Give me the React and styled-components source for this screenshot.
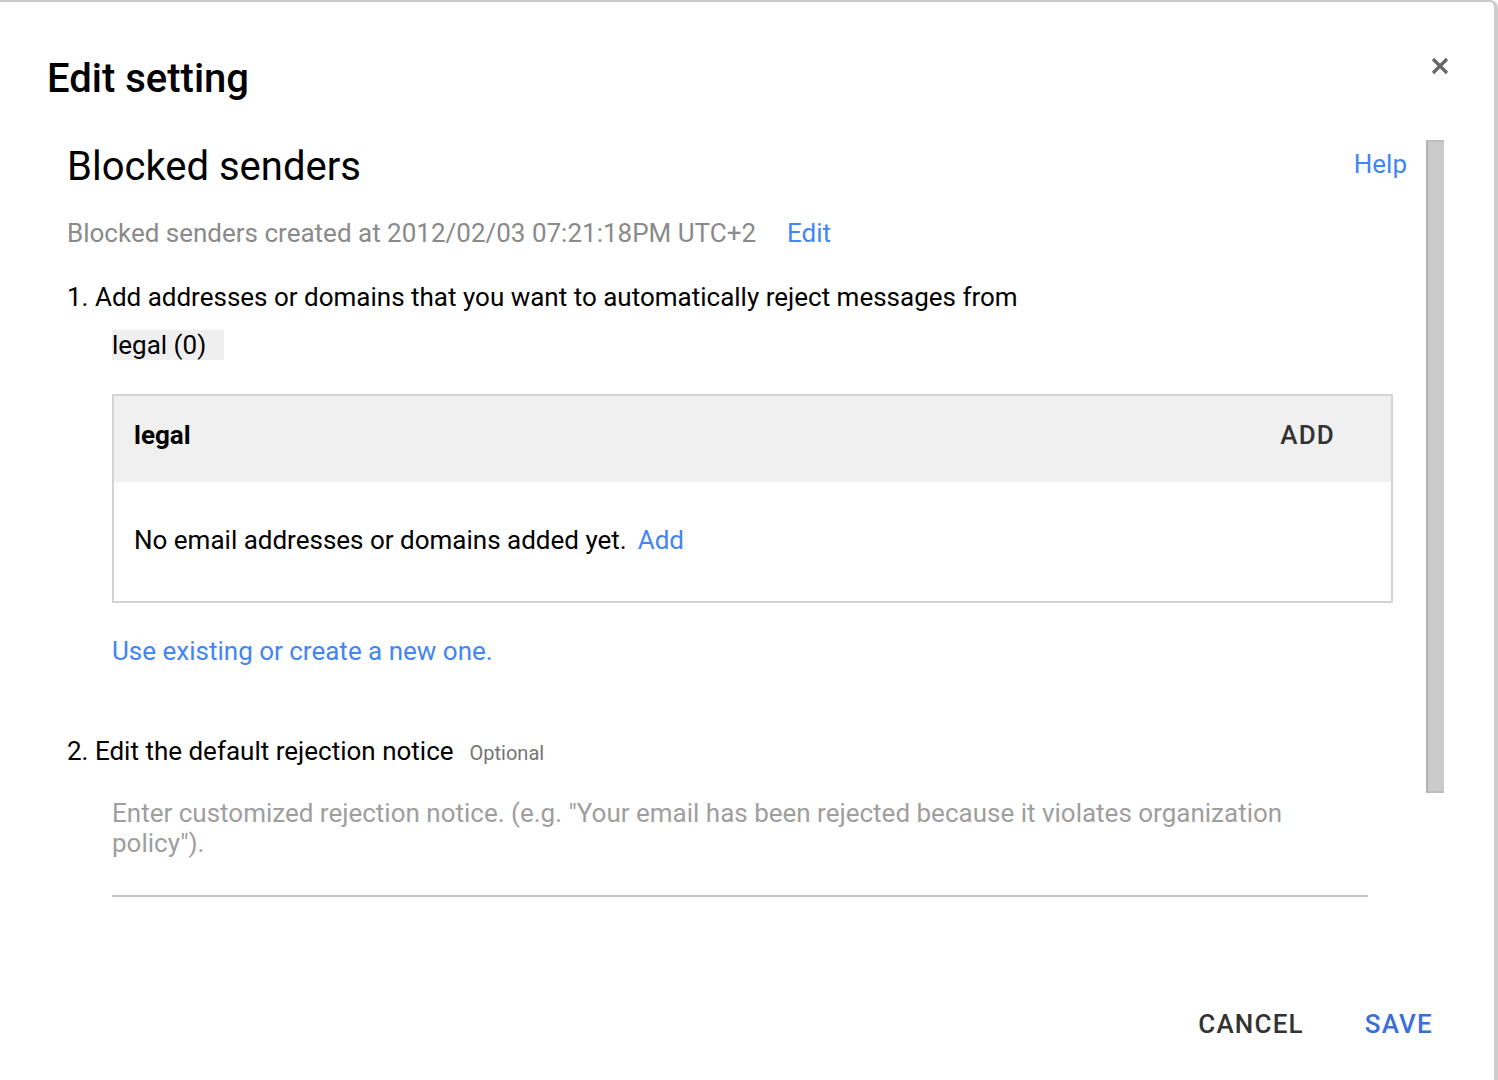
import React from "react";
import styled, { createGlobalStyle } from "styled-components";

const GlobalStyle = createGlobalStyle`
  html, body { margin: 0; padding: 0; background: #ffffff; }
  body { font-family: Roboto, "Liberation Sans", Arial, sans-serif; }
  * { box-sizing: border-box; }
`;

const Dialog = styled.div`
  width: 1498px;
  height: 1080px;
  background: #ffffff;
  border-top: 2px solid #c9c9c9;
  border-right: 4px solid #cdcdcd;
  border-top-right-radius: 8px;
  display: flex;
  flex-direction: column;
  overflow: hidden;
  font-family: Roboto, "Liberation Sans", Arial, sans-serif;
  color: #000;
`;

const Header = styled.header`
  display: flex;
  justify-content: space-between;
  align-items: flex-start;
  padding: 49px 45px 0 47px;
`;

const DialogTitle = styled.h1`
  margin: 4px 0 0;
  font-size: 40px;
  line-height: 48px;
  font-weight: 500;
  color: #000;
`;

const CloseButton = styled.button`
  width: 18px;
  height: 18px;
  margin-top: 6px;
  padding: 0;
  border: none;
  background: none;
  color: #666;
  cursor: pointer;
  display: flex;
  svg { width: 18px; height: 18px; display: block; }
`;

const Body = styled.div`
  flex: 1;
  min-height: 0;
  display: flex;
`;

const Content = styled.div`
  flex: 1;
  min-width: 0;
  display: flex;
  flex-direction: column;
  padding: 40px 19px 0 67px;
`;

const ScrollThumb = styled.div`
  width: 18px;
  height: 653px;
  margin: 37px 50px 0 0;
  background: #cbcbcb;
  border-left: 2px solid #b3b3b3;
  border-top: 2px solid #bcbcbc;
  border-bottom: 2px solid #bcbcbc;
`;

const SectionHead = styled.div`
  display: flex;
  justify-content: space-between;
  align-items: flex-start;
`;

const SectionTitle = styled.h2`
  margin: 0;
  font-size: 40px;
  line-height: 48px;
  font-weight: 400;
  color: #000;
`;

const Link = styled.a`
  color: #4285f4;
  text-decoration: none;
  cursor: pointer;
  font-size: 26px;
  line-height: 30px;
  margin-left: ${(p) => p.$gap || 0}px;
  margin-top: ${(p) => p.$top || 0}px;
`;

const MetaLine = styled.div`
  margin-top: 27px;
  font-size: 26px;
  line-height: 30px;
  color: #8a8a8a;
`;

const StepTitle = styled.div`
  margin-top: ${(p) => p.$top}px;
  font-size: 26px;
  line-height: 30px;
  color: #000;
`;

const OptionalTag = styled.span`
  margin-left: 16px;
  font-size: 20px;
  color: #757575;
`;

const Chip = styled.div`
  align-self: flex-start;
  margin: 18px 0 0 45px;
  padding-right: 18px;
  background: #efefef;
  font-size: 26px;
  line-height: 30px;
  color: #000;
`;

const ListBox = styled.div`
  margin: 34px 14px 0 45px;
  border: 2px solid #d3d3d3;
`;

const ListHeader = styled.div`
  height: 86px;
  display: flex;
  justify-content: space-between;
  align-items: flex-start;
  padding: 24px 56px 0 20px;
  background: #f0f0f0;
`;

const ListName = styled.div`
  font-size: 26px;
  line-height: 30px;
  font-weight: 700;
  color: #000;
`;

const TextButton = styled.button`
  padding: 0 ${(p) => p.$pad ?? 30}px;
  border: none;
  background: none;
  font-family: inherit;
  font-size: 26px;
  line-height: 30px;
  font-weight: 500;
  letter-spacing: 1.2px;
  color: ${(p) => p.$color || "#333"};
  cursor: pointer;
`;

const ListBody = styled.div`
  padding: 43px 20px 46px;
  font-size: 26px;
  line-height: 30px;
  color: #000;
`;

const BlockLink = styled(Link)`
  align-self: flex-start;
  margin: 33px 0 0 45px;
`;

const NoticeField = styled.textarea`
  display: block;
  width: 1256px;
  height: 99px;
  margin: 30px 0 0 45px;
  padding: 0 0 36px;
  border: none;
  border-bottom: 2px solid #c4c4c4;
  background: transparent;
  resize: none;
  outline: none;
  overflow: hidden;
  font-family: inherit;
  font-size: 26px;
  line-height: 30px;
  color: #000;
  &::placeholder { color: #9e9e9e; opacity: 1; }
`;

const Footer = styled.footer`
  display: flex;
  justify-content: flex-end;
  gap: 0;
  padding: 0 31px 41px 0;
`;

const CloseIcon = () => (
  <svg viewBox="0 0 18 18" aria-hidden="true">
    <path
      d="M2 2 L16 16 M16 2 L2 16"
      stroke="currentColor"
      strokeWidth="3.2"
      fill="none"
    />
  </svg>
);

export default function App() {
  return (
    <>
      <GlobalStyle />
      <Dialog>
        <Header>
          <DialogTitle>Edit setting</DialogTitle>
          <CloseButton aria-label="Close">
            <CloseIcon />
          </CloseButton>
        </Header>
        <Body>
          <Content>
            <SectionHead>
              <SectionTitle>Blocked senders</SectionTitle>
              <Link $top={6}>Help</Link>
            </SectionHead>
            <MetaLine>
              Blocked senders created at 2012/02/03 07:21:18PM UTC+2
              <Link $gap={31}>Edit</Link>
            </MetaLine>
            <StepTitle $top={34}>
              1. Add addresses or domains that you want to automatically reject messages from
            </StepTitle>
            <Chip>legal (0)</Chip>
            <ListBox>
              <ListHeader>
                <ListName>legal</ListName>
                <TextButton $pad={0}>ADD</TextButton>
              </ListHeader>
              <ListBody>
                No email addresses or domains added yet.
                <Link $gap={11}>Add</Link>
              </ListBody>
            </ListBox>
            <BlockLink>Use existing or create a new one.</BlockLink>
            <StepTitle $top={70}>
              2. Edit the default rejection notice
              <OptionalTag>Optional</OptionalTag>
            </StepTitle>
            <NoticeField
              placeholder={'Enter customized rejection notice. (e.g. "Your email has been rejected because it violates organization policy").'}
            />
          </Content>
          <ScrollThumb />
        </Body>
        <Footer>
          <TextButton $pad={31}>CANCEL</TextButton>
          <TextButton $color="#3a6fd9">SAVE</TextButton>
        </Footer>
      </Dialog>
    </>
  );
}
